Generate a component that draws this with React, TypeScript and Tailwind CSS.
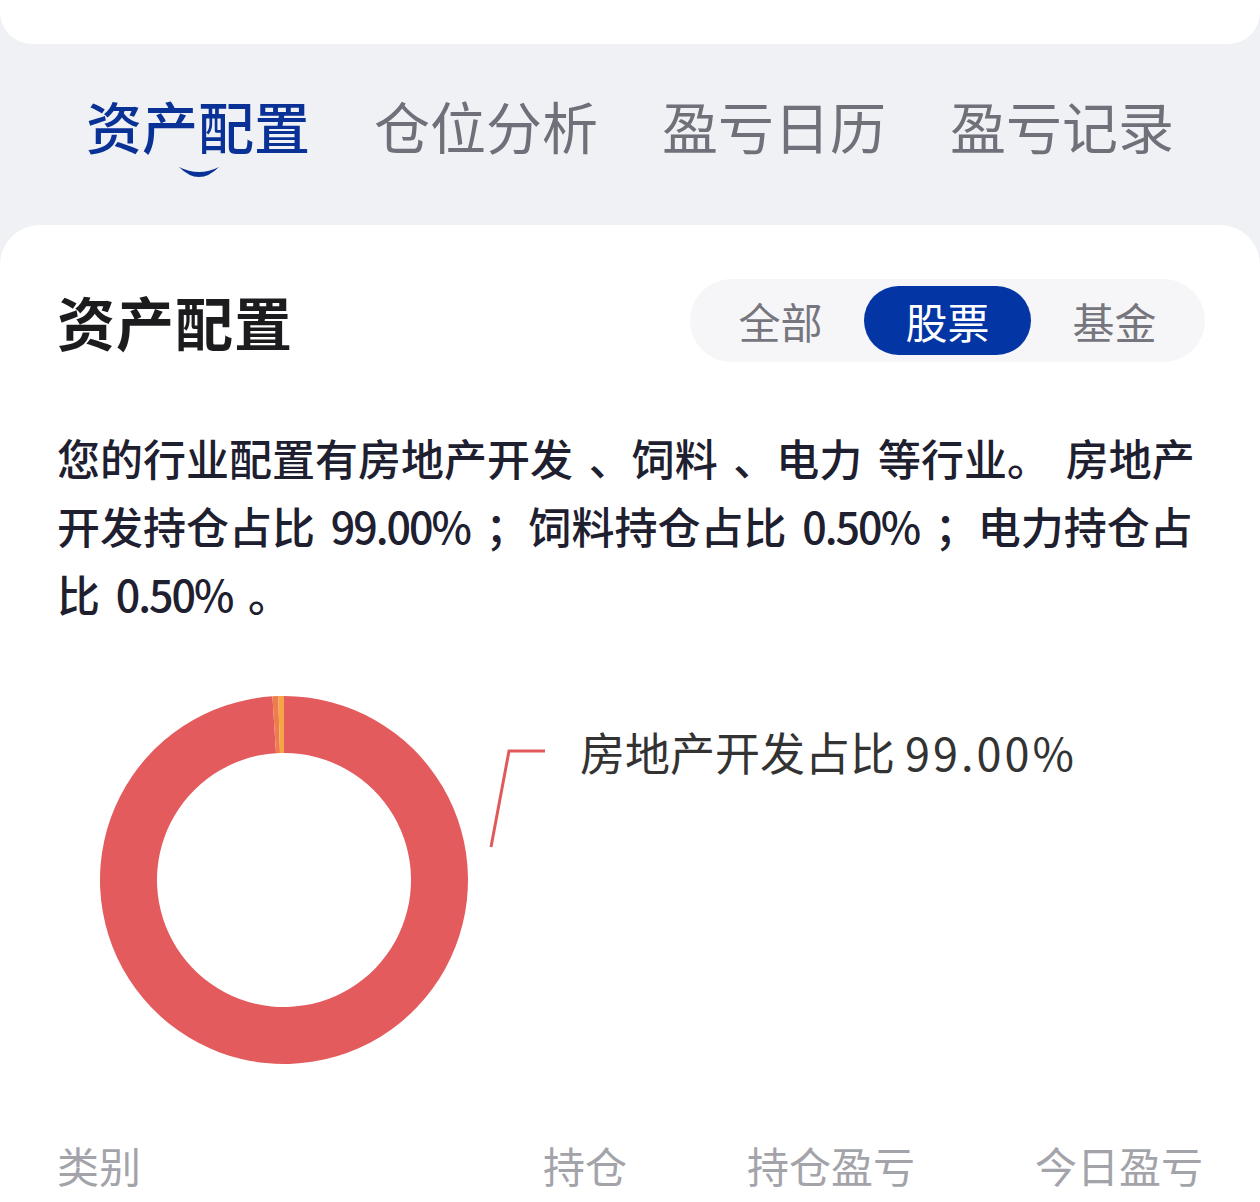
import React from "react";

const FONT = { fontFamily: '"Noto Sans CJK SC", "Noto Sans", sans-serif' };

function arcPath(cx: number, cy: number, ro: number, ri: number, a0: number, a1: number) {
  const p = (r: number, a: number) => {
    const rad = ((a - 90) * Math.PI) / 180;
    return [cx + r * Math.cos(rad), cy + r * Math.sin(rad)];
  };
  const large = a1 - a0 > 180 ? 1 : 0;
  const [x0, y0] = p(ro, a0);
  const [x1, y1] = p(ro, a1);
  const [x2, y2] = p(ri, a1);
  const [x3, y3] = p(ri, a0);
  return `M${x0} ${y0} A${ro} ${ro} 0 ${large} 1 ${x1} ${y1} L${x2} ${y2} A${ri} ${ri} 0 ${large} 0 ${x3} ${y3} Z`;
}

const Num = ({ children }: { children: React.ReactNode }) => (
  <span className="tracking-[-2px]">{children}</span>
);

export default function App() {
  const cx = 284;
  const cy = 250;
  const ro = 184;
  const ri = 127;
  return (
    <div className="w-[1260px] h-[1202px] bg-[#eff1f5] overflow-hidden flex flex-col" style={FONT}>
      <div className="h-[44px] bg-white rounded-b-[32px] shrink-0" />

      {/* Tabs */}
      <div className="flex pl-[86px] gap-[64px] mt-[53px] shrink-0">
        <div className="relative w-[224px] text-[56px] leading-[56px] font-medium text-[#0a3296] whitespace-nowrap">
          资产配置
          <svg className="absolute left-[92px] top-[68px]" width="42" height="14" viewBox="0 0 42 14">
            <path d="M1 2 Q21 22 41 2 Q21 12 1 2 Z" fill="#0a3296" />
          </svg>
        </div>
        <div className="w-[224px] text-[56px] leading-[56px] text-[#6f7079] whitespace-nowrap">仓位分析</div>
        <div className="w-[224px] text-[56px] leading-[56px] text-[#6f7079] whitespace-nowrap">盈亏日历</div>
        <div className="w-[224px] text-[56px] leading-[56px] text-[#6f7079] whitespace-nowrap">盈亏记录</div>
      </div>

      {/* Card */}
      <div className="mt-[72px] flex-1 bg-white rounded-t-[40px] pl-[57px] pr-[55px] flex flex-col">
        <div className="mt-[54px] flex items-center justify-between h-[83px]">
          <div className="text-[58px] leading-[58px] font-bold text-[#1c1c1e] tracking-[1px]">资产配置</div>
          <div className="flex bg-[#f6f6f8] rounded-full p-[7px]">
            <div className="w-[167px] h-[69px] flex items-center justify-center text-[42px] text-[#76767e]">全部</div>
            <div className="w-[167px] h-[69px] flex items-center justify-center text-[42px] text-white bg-[#0335a5] rounded-full">股票</div>
            <div className="w-[167px] h-[69px] flex items-center justify-center text-[42px] text-[#76767e]">基金</div>
          </div>
        </div>

        <div className="mt-[61px] text-[43px] leading-[68px] font-medium text-[#1e2030] whitespace-nowrap [word-spacing:6px]">
          <div>您的行业配置有房地产开发 、饲料 、电力 等行业。 房地产</div>
          <div>
            开发持仓占比 <Num>99.00%</Num> ；饲料持仓占比 <Num>0.50%</Num> ；电力持仓占
          </div>
          <div>
            比 <Num>0.50%</Num> 。
          </div>
        </div>

        {/* Chart */}
        <div className="relative -ml-[57px] -mr-[55px] h-[483px] shrink-0">
          <svg className="absolute left-0 top-0" width="1260" height="483" viewBox="0 0 1260 483">
            <path d={arcPath(cx, cy + 3, ro, ri, 0, 356.4)} fill="#e35b5d" />
            <path d={arcPath(cx, cy + 3, ro, ri, 356.4, 358.2)} fill="#ee7c4c" />
            <path d={arcPath(cx, cy + 3, ro, ri, 358.2, 360)} fill="#f4a647" />
            <polyline points="491,220 509,124 545,124" fill="none" stroke="#e05a5c" strokeWidth="3" />
          </svg>
          <div className="absolute left-[580px] top-[102px] text-[45px] leading-[45px] text-[#333333] whitespace-nowrap">
            房地产开发占比 <span className="tracking-[3px]">99.00%</span>
          </div>
        </div>

        <div className="mt-[34px] flex text-[42px] leading-[42px] text-[#a3a3aa] pr-[2px]">
          <div className="flex-1">类别</div>
          <div className="w-[288px] text-right">持仓</div>
          <div className="w-[288px] text-right">持仓盈亏</div>
          <div className="w-[288px] text-right">今日盈亏</div>
        </div>
      </div>
    </div>
  );
}
